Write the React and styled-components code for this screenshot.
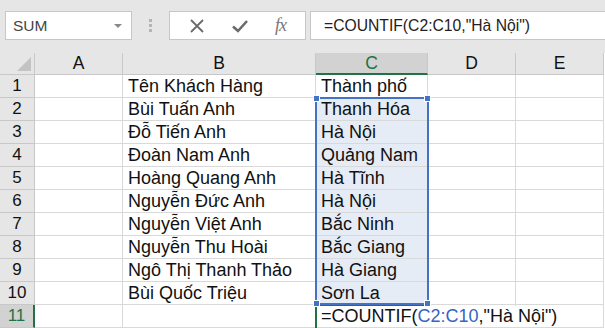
import styled, { createGlobalStyle } from "styled-components";

const GlobalStyle = createGlobalStyle`
  body {
    margin: 0;
    background: #ffffff;
    font-family: "Liberation Sans", Arial, sans-serif;
  }
`;

const Page = styled.div`
  width: 605px;
  height: 328px;
  overflow: hidden;
  background: #e6e6e6;
`;

const Toolbar = styled.div`
  height: 53px;
  display: flex;
  align-items: flex-start;
  padding-top: 11px;
  box-sizing: border-box;
  padding-left: 5px;
`;

const NameBox = styled.div`
  width: 127px;
  height: 29px;
  box-sizing: border-box;
  background: #fff;
  border: 1px solid #c6c6c6;
  display: flex;
  align-items: center;
  justify-content: space-between;
  padding: 0 9px 0 7px;
  font-size: 15.5px;
  color: #444;
`;

const Caret = styled.span`
  width: 0;
  height: 0;
  border-left: 4px solid transparent;
  border-right: 4px solid transparent;
  border-top: 4px solid #8a8a8a;
`;

const Grip = styled.div`
  width: 37px;
  height: 29px;
  display: flex;
  flex-direction: column;
  align-items: center;
  justify-content: center;
  gap: 2px;
  span {
    width: 3px;
    height: 3px;
    background: #b4b4b4;
  }
`;

const IconBox = styled.div`
  width: 137px;
  height: 29px;
  box-sizing: border-box;
  background: #fff;
  border: 1px solid #c6c6c6;
  display: flex;
  align-items: center;
  justify-content: space-around;
  padding: 0 6px;
`;

const Fx = styled.span`
  font-family: "Liberation Serif", "Times New Roman", serif;
  font-style: italic;
  font-size: 18px;
  color: #777;
  letter-spacing: -1px;
`;

const FormulaBox = styled.div`
  flex: 1;
  margin-left: 4px;
  height: 29px;
  box-sizing: border-box;
  background: #fff;
  border: 1px solid #c6c6c6;
  border-right: none;
  display: flex;
  align-items: center;
  padding-left: 13px;
  font-size: 15.7px;
  color: #222;
`;

const Sheet = styled.div`
  position: relative;
  display: grid;
  grid-template-columns: 35px 88px 193px 112px 88px 88px;
  grid-template-rows: 22px repeat(11, 23px);
  background: #fff;
`;

const Corner = styled.div`
  background: #e6e6e6;
  border-right: 1px solid #c8c8c8;
  border-bottom: 1px solid #c8c8c8;
  position: relative;
  &::after {
    content: "";
    position: absolute;
    right: 3px;
    bottom: 3px;
    border-left: 14px solid transparent;
    border-bottom: 14px solid #c3c3c3;
  }
`;

const ColHead = styled.div`
  background: ${(p) => (p.$active ? "#d2d2d2" : "#e6e6e6")};
  color: ${(p) => (p.$active ? "#217346" : "#111")};
  border-right: 1px solid #c8c8c8;
  border-bottom: ${(p) => (p.$active ? "2px solid #217346" : "1px solid #c8c8c8")};
  display: flex;
  align-items: center;
  justify-content: center;
  font-size: 17.5px;
  box-sizing: border-box;
`;

const RowHead = styled.div`
  background: ${(p) => (p.$active ? "#d2d2d2" : "#e6e6e6")};
  color: ${(p) => (p.$active ? "#217346" : "#111")};
  border-right: ${(p) => (p.$active ? "2px solid #217346" : "1px solid #c8c8c8")};
  border-bottom: 1px solid #c8c8c8;
  display: flex;
  align-items: center;
  justify-content: center;
  font-size: 17px;
  box-sizing: border-box;
`;

const Cell = styled.div`
  border-right: 1px solid #d9d9d9;
  border-bottom: 1px solid #d9d9d9;
  background: ${(p) => (p.$selected ? "#e6ecf6" : "#fff")};
  display: flex;
  align-items: center;
  padding-left: 5px;
  font-size: 18px;
  color: #111;
  white-space: nowrap;
  box-sizing: border-box;
  overflow: visible;
  position: relative;
  z-index: ${(p) => (p.$over ? 2 : 0)};
`;

const OverflowText = styled.span`
  background: #fff;
  padding-right: 4px;
`;

const Ref = styled.span`
  color: #3465c4;
`;

const Selection = styled.div`
  position: absolute;
  left: 315px;
  top: 44px;
  width: 114px;
  height: 208px;
  box-sizing: border-box;
  border: 2px solid #4472c4;
  pointer-events: none;
  z-index: 3;
`;

const Handle = styled.span`
  position: absolute;
  width: 5px;
  height: 5px;
  background: #4472c4;
  border: 1px solid #fff;
  ${(p) => (p.$top ? "top: -4px;" : "bottom: -4px;")}
  ${(p) => (p.$left ? "left: -4px;" : "right: -4px;")}
`;

const ActiveCell = styled.div`
  position: absolute;
  left: 315px;
  top: 251px;
  width: 114px;
  height: 26px;
  box-sizing: border-box;
  border-top: 2px solid #217346;
  border-left: 2px solid #217346;
  z-index: 2;
`;

const names = [
  "Tên Khách Hàng",
  "Bùi Tuấn Anh",
  "Đỗ Tiến Anh",
  "Đoàn Nam Anh",
  "Hoàng Quang Anh",
  "Nguyễn Đức Anh",
  "Nguyễn Việt Anh",
  "Nguyễn Thu Hoài",
  "Ngô Thị Thanh Thảo",
  "Bùi Quốc Triệu",
];

const cities = [
  "Thành phố",
  "Thanh Hóa",
  "Hà Nội",
  "Quảng Nam",
  "Hà Tĩnh",
  "Hà Nội",
  "Bắc Ninh",
  "Bắc Giang",
  "Hà Giang",
  "Sơn La",
];

export default function App() {
  return (
    <Page>
      <GlobalStyle />
      <Toolbar>
        <NameBox>
          SUM
          <Caret />
        </NameBox>
        <Grip>
          <span />
          <span />
          <span />
        </Grip>
        <IconBox>
          <svg width="16" height="16" viewBox="0 0 16 16">
            <path d="M2 2 L14 14 M14 2 L2 14" stroke="#6a6a6a" strokeWidth="1.8" fill="none" />
          </svg>
          <svg width="18" height="16" viewBox="0 0 18 16">
            <path d="M2 8.5 L7 13 L16 3" stroke="#6a6a6a" strokeWidth="2.6" fill="none" />
          </svg>
          <Fx>fx</Fx>
        </IconBox>
        <FormulaBox>=COUNTIF(C2:C10,"Hà Nội")</FormulaBox>
      </Toolbar>
      <Sheet>
        <Corner />
        {["A", "B", "C", "D", "E"].map((c) => (
          <ColHead key={c} $active={c === "C"}>
            {c}
          </ColHead>
        ))}
        {names.map((n, i) => (
          <Row key={i} num={i + 1} name={n} city={cities[i]} selected={i > 0} />
        ))}
        <RowHead $active>11</RowHead>
        <Cell />
        <Cell />
        <Cell $over>
          <OverflowText>
            =COUNTIF(<Ref>C2:C10</Ref>,"Hà Nội")
          </OverflowText>
        </Cell>
        <Cell />
        <Cell />
        <Selection>
          <Handle $top $left />
          <Handle $top />
          <Handle $left />
          <Handle />
        </Selection>
        <ActiveCell />
      </Sheet>
    </Page>
  );
}

function Row({ num, name, city, selected }) {
  return (
    <>
      <RowHead>{num}</RowHead>
      <Cell />
      <Cell>{name}</Cell>
      <Cell $selected={selected}>{city}</Cell>
      <Cell />
      <Cell />
    </>
  );
}
